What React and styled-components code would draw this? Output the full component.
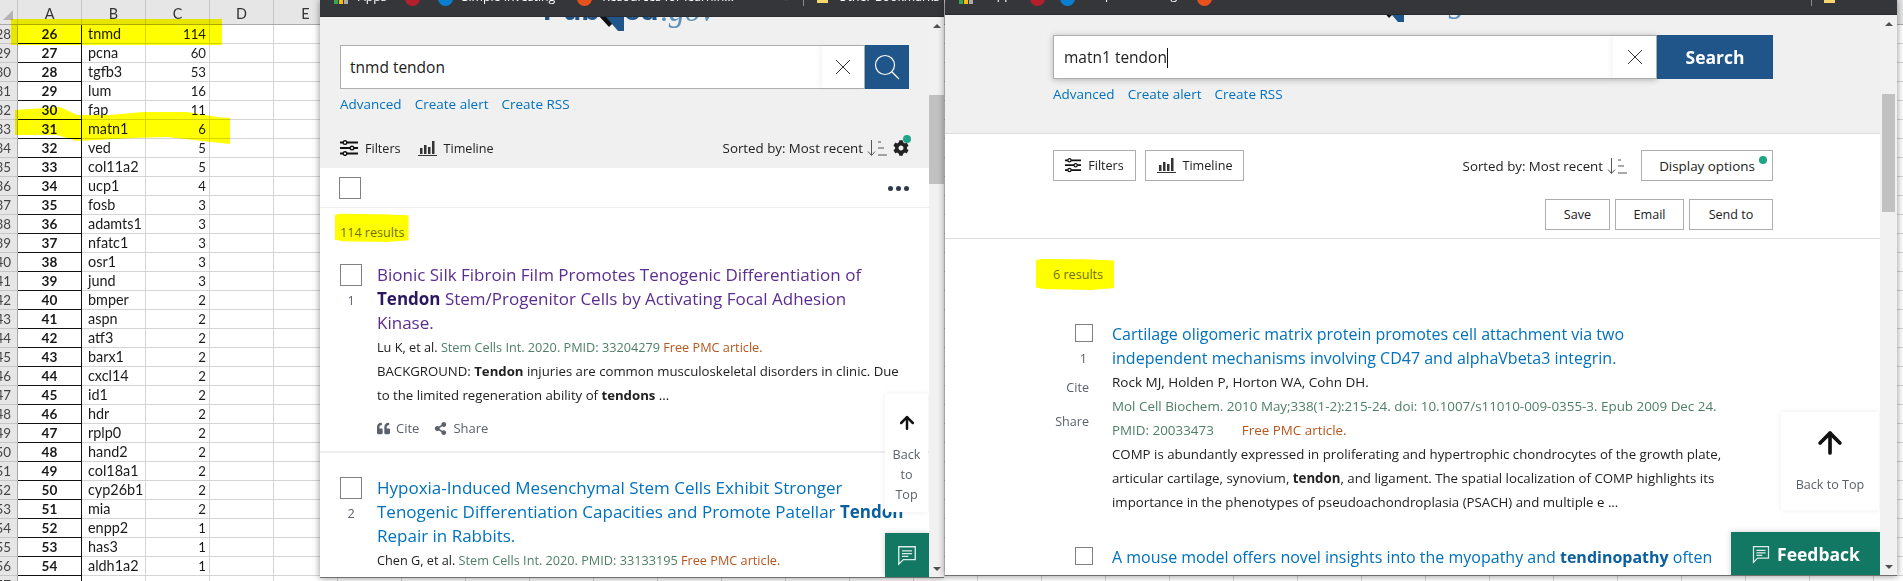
import React from "react";
import styled, { createGlobalStyle } from "styled-components";
import { ArrowUp } from "lucide-react";
import { FaCog, FaQuoteLeft, FaShareAlt } from "react-icons/fa";

const Global = createGlobalStyle`
  html, body { margin: 0; padding: 0; background: #fff; overflow: hidden; }
  * { box-sizing: border-box; }
`;

const UI = `"Open Sans", "Noto Sans", sans-serif`;

/* ---------- spreadsheet ---------- */
const Desktop = styled.div`
  position: relative;
  width: 1903px;
  height: 581px;
  overflow: hidden;
  background: #fff;
`;
const Sheet = styled.div`
  display: flex;
  flex-direction: column;
  font-family: Lato, "Liberation Sans", sans-serif;
  font-size: 14.4px;
  color: #1a1a1a;
`;
const HeaderRow = styled.div`
  display: flex;
  height: 25px;
  background: #e6e6e6;
  border-bottom: 1px solid #a9a9a9;
`;
const Corner = styled.div`
  width: 18px;
  flex: none;
  border-right: 1px solid #c6c6c6;
  display: flex;
  align-items: flex-end;
  justify-content: flex-end;
  padding: 0 4px 4px 0;
`;
const CornerMark = styled.div`
  width: 10px;
  height: 10px;
  background: #b4b4b4;
  clip-path: polygon(100% 0, 100% 100%, 0 100%);
`;
const ColHead = styled.div`
  width: 64px;
  flex: none;
  text-align: center;
  padding-top: 5px;
  line-height: 18px;
  border-right: 1px solid #c6c6c6;
  color: #333;
`;
const Row = styled.div`
  display: flex;
  height: 19px;
`;
const RowNum = styled.div`
  width: 18px;
  flex: none;
  background: #e6e6e6;
  border-right: 1px solid #a9a9a9;
  border-bottom: 1px solid #c6c6c6;
  text-align: right;
  padding-right: 6px;
  font-size: 13.4px;
  line-height: 18px;
  color: #444;
  white-space: nowrap;
  direction: rtl;
  overflow: hidden;
`;
const CellA = styled.div`
  width: 64px;
  flex: none;
  border-right: 1px solid #111;
  border-bottom: 1px solid #111;
  text-align: center;
  font-size: 13.6px;
  font-weight: 700;
  line-height: 19px;
`;
const CellB = styled.div`
  width: 64px;
  flex: none;
  border-right: 1px solid #d4d4d4;
  border-bottom: 1px solid #d4d4d4;
  padding-left: 6px;
  line-height: 18px;
  white-space: nowrap;
`;
const CellC = styled(CellB)`
  text-align: right;
  font-size: 13.2px;
  padding: 0 3px 0 0;
`;
const Empty = styled(CellB)``;
const Filler = styled.div`
  flex: 1;
  border-bottom: 1px solid #d4d4d4;
  background: repeating-linear-gradient(to right, transparent 0 63px, #d4d4d4 63px 64px);
`;
const Marker = styled.svg`
  position: absolute;
  left: 0;
  top: 0;
  mix-blend-mode: multiply;
  pointer-events: none;
`;

const genes = [
  [28, 26, "tnmd", 114], [29, 27, "pcna", 60], [30, 28, "tgfb3", 53], [31, 29, "lum", 16],
  [32, 30, "fap", 11], [33, 31, "matn1", 6], [34, 32, "ved", 5], [35, 33, "col11a2", 5],
  [36, 34, "ucp1", 4], [37, 35, "fosb", 3], [38, 36, "adamts1", 3], [39, 37, "nfatc1", 3],
  [40, 38, "osr1", 3], [41, 39, "jund", 3], [42, 40, "bmper", 2], [43, 41, "aspn", 2],
  [44, 42, "atf3", 2], [45, 43, "barx1", 2], [46, 44, "cxcl14", 2], [47, 45, "id1", 2],
  [48, 46, "hdr", 2], [49, 47, "rplp0", 2], [50, 48, "hand2", 2], [51, 49, "col18a1", 2],
  [52, 50, "cyp26b1", 2], [53, 51, "mia", 2], [54, 52, "enpp2", 1], [55, 53, "has3", 1],
  [56, 54, "aldh1a2", 1], [57, "", "", ""],
];

const Spreadsheet = () => (
  <Sheet>
    <HeaderRow>
      <Corner><CornerMark /></Corner>
      {["A", "B", "C", "D", "E"].map((c) => <ColHead key={c}>{c}</ColHead>)}
    </HeaderRow>
    {genes.map(([n, a, b, c]) => (
      <Row key={n}>
        <RowNum>{n}</RowNum>
        <CellA>{a}</CellA>
        <CellB>{b}</CellB>
        <CellC>{c}</CellC>
        <Empty />
        <Empty />
        <Filler />
      </Row>
    ))}
  </Sheet>
);

/* ---------- browser window ---------- */
const Win = styled.div`
  position: absolute;
  left: ${(p) => p.$left}px;
  top: 0;
  width: ${(p) => p.$w}px;
  height: ${(p) => p.$h}px;
  display: flex;
  flex-direction: column;
  overflow: hidden;
  background: #fff;
  box-shadow: 0 0 7px rgba(0, 0, 0, 0.45);
  border-bottom: 1px solid #707070;
  font-family: ${UI};
`;
const Bookmarks = styled.div`
  height: ${(p) => p.$h}px;
  flex: none;
  background: #35363a;
  border-bottom: 1px solid #2a2b2e;
  display: flex;
  align-items: flex-start;
  overflow: hidden;
  color: #fff;
  font-size: 12.3px;
  line-height: 16px;
  white-space: nowrap;
`;
const Mark = styled.span`
  flex: none;
  margin-left: ${(p) => p.$x}px;
  margin-top: ${(p) => p.$y ?? -11}px;
`;
const Dot = styled.span`
  flex: none;
  width: 15px;
  height: 15px;
  border-radius: 50%;
  background: ${(p) => p.$c};
  margin-left: ${(p) => p.$x}px;
  margin-top: -9px;
`;
const AppsGrid = styled.span`
  flex: none;
  width: 15px;
  margin-left: ${(p) => p.$x}px;
  height: 4px;
  background: linear-gradient(to right, #34a853 0 4px, transparent 4px 5px, #fbbc05 5px 9px, transparent 9px 10px, #aaa 10px 14px, transparent 14px);
`;
const Sep = styled.span`
  flex: none;
  width: 1px;
  height: 6px;
  background: #8a8b8d;
  margin-left: ${(p) => p.$x}px;
`;
const Folder = styled.span`
  flex: none;
  width: 11px;
  height: 3px;
  background: #f5d76e;
  margin-left: ${(p) => p.$x}px;
`;
const Main = styled.div`
  flex: 1;
  display: flex;
  min-height: 0;
`;
const Scroller = styled.div`
  position: relative;
  flex: 1;
  min-width: 0;
  overflow: hidden;
`;
const Track = styled.div`
  flex: none;
  width: ${(p) => p.$w}px;
  background: #f1f1f1;
  display: flex;
  flex-direction: column;
  align-items: center;
  padding: 7px 0 6px;
`;
const Thumb = styled.div`
  width: ${(p) => p.$w}px;
  height: ${(p) => p.$h}px;
  margin-top: ${(p) => p.$top}px;
  background: #c1c1c1;
`;
const ArrowU = styled.div`
  width: 0;
  height: 0;
  border-left: 4px solid transparent;
  border-right: 4px solid transparent;
  border-bottom: 4px solid #505050;
`;
const ArrowD = styled(ArrowU)`
  margin-top: auto;
  border-bottom: 0;
  border-top: 4px solid #505050;
`;

/* ---------- search header ---------- */
const Head = styled.div`
  background: #f0f0f0;
  padding: 0 ${(p) => p.$pr}px ${(p) => p.$pb}px ${(p) => p.$pl}px;
  border-bottom: ${(p) => (p.$line ? "1px solid #dcdcdc" : "0")};
`;
const LogoClip = styled.div`
  height: ${(p) => p.$h}px;
  margin-bottom: ${(p) => p.$mb}px;
  padding-left: ${(p) => p.$x}px;
  overflow: hidden;
  display: flex;
  align-items: flex-end;
  white-space: nowrap;
  line-height: 1;
`;
const LogoText = styled.span`
  font-family: "Liberation Sans", sans-serif;
  font-weight: 700;
  font-size: 30px;
  color: #20558a;
  margin-bottom: 6px;
`;
const LogoGov = styled.span`
  font-family: "Liberation Serif", serif;
  font-style: italic;
  font-size: 32px;
  color: #5d8fb8;
  margin: 0 0 5px 2px;
`;
const SearchRow = styled.div`
  display: flex;
  height: 44px;
`;
const SearchBox = styled.div`
  flex: 1;
  display: flex;
  align-items: center;
  justify-content: space-between;
  background: #fff;
  border: 1px solid #aeaeae;
  padding-left: ${(p) => p.$pl}px;
  font-size: 15.5px;
  color: #212121;
  box-shadow: ${(p) => (p.$focus ? "0 1px 6px rgba(0,0,0,.25)" : "none")};
`;
const Caret = styled.span`
  display: inline-block;
  width: 1px;
  height: 20px;
  background: #111;
  vertical-align: middle;
`;
const Clear = styled.div`
  width: ${(p) => p.$w}px;
  height: 100%;
  display: flex;
  align-items: center;
  justify-content: center;
  box-shadow: -3px 0 4px rgba(0, 0, 0, 0.04);
`;
const SearchBtn = styled.div`
  width: ${(p) => p.$w}px;
  flex: none;
  background: #20558a;
  color: #fff;
  font-weight: 700;
  font-size: 17.5px;
  display: flex;
  align-items: center;
  justify-content: center;
`;
const Links = styled.div`
  display: flex;
  gap: 13px;
  margin-top: 5px;
  font-size: 13.5px;
  line-height: 20px;
  color: #0071bc;
`;
const Toolbar = styled.div`
  display: flex;
  align-items: center;
  justify-content: space-between;
  height: ${(p) => p.$h}px;
  margin-top: ${(p) => p.$mt}px;
  font-size: 12.6px;
  color: #212121;
`;
const ActionBar = styled(Toolbar)`
  justify-content: flex-end;
  gap: 5px;
`;
const Controls = styled.div`
  flex: 1;
`;
const ToolGroup = styled.div`
  display: flex;
  align-items: center;
  gap: ${(p) => p.$gap}px;
`;
const PlainTool = styled.div`
  display: flex;
  align-items: center;
  gap: 7px;
`;
const Sorted = styled.span`
  font-size: 13.3px;
`;
const BoxTool = styled.div`
  display: flex;
  align-items: center;
  justify-content: center;
  gap: 7px;
  height: 31px;
  width: ${(p) => p.$w}px;
  margin-left: ${(p) => p.$ml ?? 0}px;
  background: #fff;
  border: 1px solid #aeaeae;
  position: relative;
`;
const DisplayLabel = styled.span`
  font-size: 13.4px;
`;
const Status = styled.span`
  position: absolute;
  width: 8px;
  height: 8px;
  border-radius: 50%;
  background: #20a58a;
  right: ${(p) => p.$r}px;
  top: ${(p) => p.$t}px;
`;
const GearWrap = styled.span`
  position: relative;
  display: flex;
  margin-left: 1px;
`;

/* ---------- results ---------- */
const Actions = styled.div`
  display: flex;
  align-items: center;
  justify-content: space-between;
  padding: 9px 20px 8px 19px;
  border-bottom: 1px solid #eee;
`;
const Rule = styled.div`
  height: 9px;
  border-bottom: 1px solid #dcdcdc;
`;
const Check = styled.div`
  flex: none;
  width: ${(p) => p.$s}px;
  height: ${(p) => p.$s}px;
  border: 1px solid #808080;
  background: #fff;
  margin-top: ${(p) => p.$mt ?? 0}px;
`;
const Dots = styled.div`
  display: flex;
  gap: 3px;
  & > i {
    width: 5px;
    height: 5px;
    border-radius: 50%;
    background: #2d3a4a;
  }
`;
const Count = styled.div`
  display: table;
  background: #ffff00;
  color: #6f6f10;
  font-size: 12.6px;
  line-height: ${(p) => p.$lh}px;
  margin: ${(p) => p.$m};
  padding: ${(p) => p.$p};
  clip-path: polygon(0 6%, 8% 3%, 60% 4%, 100% 8%, 100% 94%, 70% 100%, 10% 97%, 0 92%);
`;
const Result = styled.div`
  display: flex;
  padding: ${(p) => p.$p};
  border-bottom: ${(p) => (p.$sep ? "2px solid #eee" : "0")};
`;
const Side = styled.div`
  flex: none;
  width: ${(p) => p.$w}px;
  display: flex;
  flex-direction: column;
  align-items: ${(p) => p.$align};
  font-size: 12.6px;
  color: #5b616b;
`;
const Num = styled.div`
  line-height: 20px;
  margin: ${(p) => p.$m};
`;
const SideLink = styled.div`
  line-height: 20px;
  margin: ${(p) => p.$m};
`;
const Body = styled.div`
  margin-left: ${(p) => p.$ml}px;
  padding-top: ${(p) => p.$pt ?? 0}px;
  white-space: nowrap;
`;
const Title = styled.div`
  font-size: ${(p) => p.$s}px;
  line-height: 24px;
  color: ${(p) => (p.$visited ? "#5b2d91" : "#0071bc")};
  & b { font-weight: 700; color: ${(p) => (p.$visited ? "#2b1660" : "#0a5f9e")}; }
`;
const Line = styled.div`
  font-size: ${(p) => p.$s}px;
  line-height: 24px;
  color: #212121;
  & b { font-weight: 700; }
`;
const Cit = styled.span`
  color: #4f7f68;
`;
const Free = styled.span`
  color: #b5561d;
  margin-left: ${(p) => p.$ml ?? 0}px;
`;
const CiteRow = styled.div`
  display: flex;
  align-items: center;
  gap: 15px;
  height: 24px;
  margin-top: 9px;
  font-size: 13px;
  color: #5b616b;
`;
const CiteItem = styled.span`
  display: flex;
  align-items: center;
  gap: 6px;
`;

/* ---------- floating ---------- */
const BackTop = styled.div`
  position: absolute;
  right: 1px;
  top: ${(p) => p.$top}px;
  width: ${(p) => p.$w}px;
  height: ${(p) => p.$h}px;
  background: #fff;
  display: flex;
  flex-direction: column;
  align-items: center;
  text-align: center;
  padding-top: ${(p) => p.$pt}px;
  font-size: 12.6px;
  line-height: 20px;
  color: #5b616b;
  box-shadow: 0 0 6px rgba(0, 0, 0, 0.08);
`;
const BackLabel = styled.div`
  margin-top: ${(p) => p.$mt}px;
`;
const Feedback = styled.div`
  position: absolute;
  right: 0;
  bottom: 0;
  width: ${(p) => p.$w}px;
  height: ${(p) => p.$h}px;
  background: #137863;
  color: #fff;
  font-size: 17.5px;
  font-weight: 700;
  display: flex;
  align-items: center;
  justify-content: center;
  gap: 6px;
  box-shadow: 0 0 6px rgba(0, 0, 0, 0.2);
`;

/* ---------- icons ---------- */
const XIcon = ({ s }) => (
  <svg width={s} height={s} viewBox="0 0 16 16" fill="none" stroke="#333" strokeWidth="1">
    <path d="M1 1l14 14M15 1L1 15" />
  </svg>
);
const SearchIcon = () => (
  <svg width="26" height="26" viewBox="0 0 26 26" fill="none" stroke="#fff" strokeWidth="1.2">
    <circle cx="11" cy="11" r="9.5" />
    <path d="M18 18l7 7" />
  </svg>
);
const Sliders = ({ s = 18 }) => (
  <svg width={s} height={s * 0.9} viewBox="0 0 18 16" fill="none" stroke="#111" strokeWidth="2">
    <path d="M0 2.5h18M0 8h18M0 13.5h18" />
    <g fill="#fff" strokeWidth="1.4">
      <circle cx="5" cy="2.5" r="1.8" />
      <circle cx="12" cy="8" r="1.8" />
      <circle cx="5" cy="13.5" r="1.8" />
    </g>
  </svg>
);
const Bars = ({ s = 19 }) => (
  <svg width={s} height={s * 0.85} viewBox="0 0 19 16" fill="#333">
    <path d="M2 8h2.5v6H2zM6 5h2.5v9H6zM10 7h2.5v7H10zM14 1h2.5v13H14zM0 15h19v1H0z" />
  </svg>
);
const SortIcon = () => (
  <svg width="21" height="18" viewBox="0 0 21 18" fill="none" stroke="#555" strokeWidth="1">
    <path d="M4.5 1v15M1 12.5l3.5 4 3.5-4M11 3h3M11 9h6M11 16h9" />
  </svg>
);
const Chat = ({ s }) => (
  <svg width={s} height={s} viewBox="0 0 24 24" fill="none" stroke="#fff" strokeOpacity=".85" strokeWidth="1.5">
    <path d="M3 3h18v14H8l-5 5z" />
    <path d="M6.5 7.5h11M6.5 10.5h11M6.5 13.5h7" />
  </svg>
);
const BookMark = () => (
  <svg width="24" height="22" viewBox="0 0 24 22" style={{ marginBottom: -8 }}>
    <path d="M0 0l8 8 4-1 12 14V0z" fill="#20558a" />
    <path d="M0 0l9 10 3-3L6 0z" fill="#111" />
  </svg>
);
const TopLogo = ({ h, mb, x }) => (
  <LogoClip $h={h} $mb={mb} $x={x}>
    <LogoText>Pub</LogoText>
    <BookMark />
    <LogoText>ed</LogoText>
    <LogoGov>.gov</LogoGov>
  </LogoClip>
);

/* ---------- page ---------- */
export default function App() {
  return (
    <Desktop>
      <Global />
      <Spreadsheet />
      <Marker width="240" height="150" viewBox="0 0 240 150">
        <path d="M11 19H222V45H11z" fill="#ffff00" />
        <path d="M15 110L60 107L77 115L110 115L143 112L187 112L217 117L230 118V144L167 137L133 138L77 141L57 135L15 135z" fill="#ffff00" />
      </Marker>

      <Win $left={320} $w={624} $h={578}>
        <Bookmarks $h={17}>
          <AppsGrid $x={14} />
          <Mark $x={9}>Apps</Mark>
          <Dot $x={18} $c="#b3202c" />
          <Dot $x={18} $c="#0a7fd0" />
          <Mark $x={9}>Simple Investing</Mark>
          <Dot $x={22} $c="#e8501c" />
          <Mark $x={10}>Resources for learnin...</Mark>
          <Mark $x={50}>»</Mark>
          <Sep $x={13} />
          <Folder $x={13} />
          <Mark $x={10}>Other Bookmarks</Mark>
        </Bookmarks>
        <Main>
          <Scroller>
            <Head $pl={20} $pr={20} $pb={8}>
              <TopLogo h={14} mb={14} x={203} />
              <SearchRow>
                <SearchBox $pl={9}>
                  tnmd tendon
                  <Clear $w={42}><XIcon s={16} /></Clear>
                </SearchBox>
                <SearchBtn $w={44}><SearchIcon /></SearchBtn>
              </SearchRow>
              <Links>
                <span>Advanced</span>
                <span>Create alert</span>
                <span>Create RSS</span>
              </Links>
              <Toolbar $h={24} $mt={22}>
                <ToolGroup $gap={17}>
                  <PlainTool><Sliders />Filters</PlainTool>
                  <PlainTool><Bars />Timeline</PlainTool>
                </ToolGroup>
                <ToolGroup $gap={4}>
                  <Sorted>Sorted by: Most recent</Sorted>
                  <SortIcon />
                  <GearWrap>
                    <FaCog size={16} color="#222" />
                    <Status $r={-2} $t={-5} />
                  </GearWrap>
                </ToolGroup>
              </Toolbar>
            </Head>
            <Actions>
              <Check $s={22} />
              <Dots><i /><i /><i /></Dots>
            </Actions>
            <Count $lh={19} $m="5px 0 20px 15px" $p="10px 4px 0 5px">114 results</Count>
            <Result $p="0 20px 11px 20px" $sep>
              <Side $w={22} $align="center">
                <Check $s={22} $mt={2} />
                <Num $m="5px 0 0">1</Num>
              </Side>
              <Body $ml={15} $pt={1}>
                <Title $s={17} $visited>
                  Bionic Silk Fibroin Film Promotes Tenogenic Differentiation of<br />
                  <b>Tendon</b> Stem/Progenitor Cells by Activating Focal Adhesion<br />
                  Kinase.
                </Title>
                <Line $s={12.7}>Lu K, et al. <Cit>Stem Cells Int. 2020. PMID: 33204279</Cit> <Free>Free PMC article.</Free></Line>
                <Line $s={13.2}>BACKGROUND: <b>Tendon</b> injuries are common musculoskeletal disorders in clinic. Due</Line>
                <Line $s={13.2}>to the limited regeneration ability of <b>tendons</b> ...</Line>
                <CiteRow>
                  <CiteItem><FaQuoteLeft size={13} />Cite</CiteItem>
                  <CiteItem><FaShareAlt size={13} />Share</CiteItem>
                </CiteRow>
              </Body>
            </Result>
            <Result $p="22px 20px 0 20px">
              <Side $w={22} $align="center">
                <Check $s={22} $mt={2} />
                <Num $m="5px 0 0">2</Num>
              </Side>
              <Body $ml={15} $pt={1}>
                <Title $s={17}>
                  Hypoxia-Induced Mesenchymal Stem Cells Exhibit Stronger<br />
                  Tenogenic Differentiation Capacities and Promote Patellar <b>Tendon</b><br />
                  Repair in Rabbits.
                </Title>
                <Line $s={12.7}>Chen G, et al. <Cit>Stem Cells Int. 2020. PMID: 33133195</Cit> <Free>Free PMC article.</Free></Line>
              </Body>
            </Result>
            <BackTop $top={377} $w={43} $h={118} $pt={19}>
              <ArrowUp size={20} strokeWidth={3} color="#111" />
              <BackLabel $mt={12}>Back<br />to<br />Top</BackLabel>
            </BackTop>
            <Feedback $w={44} $h={44}><Chat s={22} /></Feedback>
          </Scroller>
          <Track $w={15}>
            <ArrowU />
            <Thumb $w={15} $h={89} $top={67} />
            <ArrowD />
          </Track>
        </Main>
      </Win>

      <Win $left={945} $w={952} $h={576}>
        <Bookmarks $h={15}>
          <AppsGrid $x={14} />
          <Mark $x={15} $y={-13}>Apps</Mark>
          <Dot $x={12} $c="#b3202c" />
          <Dot $x={15} $c="#0a7fd0" />
          <Mark $x={9} $y={-13}>Simple Investing</Mark>
          <Dot $x={20} $c="#e8501c" />
          <Mark $x={10} $y={-13}>Resources for learnin...</Mark>
          <Mark $x={46} $y={-13}>»</Mark>
          <Sep $x={405} />
          <Folder $x={12} />
        </Bookmarks>
        <Main>
          <Scroller>
            <Head $pl={108} $pr={107} $pb={29} $line>
              <TopLogo h={7} mb={13} x={270} />
              <SearchRow>
                <SearchBox $pl={10} $focus>
                  <span>matn1 tendon<Caret /></span>
                  <Clear $w={43}><XIcon s={16} /></Clear>
                </SearchBox>
                <SearchBtn $w={116}>Search</SearchBtn>
              </SearchRow>
              <Links>
                <span>Advanced</span>
                <span>Create alert</span>
                <span>Create RSS</span>
              </Links>
            </Head>
            <Result $p="16px 107px 0 108px">
              <Controls>
                <Toolbar $h={31} $mt={0}>
                  <ToolGroup $gap={9}>
                    <BoxTool $w={83}><Sliders s={16} />Filters</BoxTool>
                    <BoxTool $w={99}><Bars />Timeline</BoxTool>
                  </ToolGroup>
                  <ToolGroup $gap={4}>
                    <Sorted>Sorted by: Most recent</Sorted>
                    <SortIcon />
                    <BoxTool $w={132} $ml={9}><DisplayLabel>Display options</DisplayLabel><Status $r={5} $t={5} /></BoxTool>
                  </ToolGroup>
                </Toolbar>
                <ActionBar $h={31} $mt={18}>
                  <BoxTool $w={65}>Save</BoxTool>
                  <BoxTool $w={69}>Email</BoxTool>
                  <BoxTool $w={84}>Send to</BoxTool>
                </ActionBar>
              </Controls>
            </Result>
            <Rule />
            <Count $lh={20} $m="19px 0 32px 91px" $p="7px 11px 5px 17px">6 results</Count>
            <Result $p="0 0 31px 108px">
              <Side $w={40} $align="flex-end">
                <Check $s={18} $mt={2} />
                <Num $m="7px 6px 0 0">1</Num>
                <SideLink $m="9px 4px 0 0">Cite</SideLink>
                <SideLink $m="14px 4px 0 0">Share</SideLink>
              </Side>
              <Body $ml={19}>
                <Title $s={16}>
                  Cartilage oligomeric matrix protein promotes cell attachment via two<br />
                  independent mechanisms involving CD47 and alphaVbeta3 integrin.
                </Title>
                <Line $s={13.5}>Rock MJ, Holden P, Horton WA, Cohn DH.</Line>
                <Line $s={13.4}><Cit>Mol Cell Biochem. 2010 May;338(1-2):215-24. doi: 10.1007/s11010-009-0355-3. Epub 2009 Dec 24.</Cit></Line>
                <Line $s={13.4}><Cit>PMID: 20033473</Cit><Free $ml={28}>Free PMC article.</Free></Line>
                <Line $s={13.27}>COMP is abundantly expressed in proliferating and hypertrophic chondrocytes of the growth plate,</Line>
                <Line $s={13.27}>articular cartilage, synovium, <b>tendon</b>, and ligament. The spatial localization of COMP highlights its</Line>
                <Line $s={13.27}>importance in the phenotypes of pseudoachondroplasia (PSACH) and multiple e ...</Line>
              </Body>
            </Result>
            <Result $p="0 0 0 108px">
              <Side $w={40} $align="flex-end">
                <Check $s={18} $mt={2} />
              </Side>
              <Body $ml={19}>
                <Title $s={16}>
                  A mouse model offers novel insights into the myopathy and <b>tendinopathy</b> often<br />
                  associated with pseudoachondroplasia and multiple epiphyseal dysplasia.
                </Title>
              </Body>
            </Result>
            <BackTop $top={397} $w={98} $h={98} $pt={14}>
              <ArrowUp size={34} strokeWidth={2.6} color="#111" />
              <BackLabel $mt={15}>Back to Top</BackLabel>
            </BackTop>
            <Feedback $w={149} $h={43}><Chat s={20} />Feedback</Feedback>
          </Scroller>
          <Track $w={17}>
            <ArrowU />
            <Thumb $w={13} $h={118} $top={68} />
            <ArrowD />
          </Track>
        </Main>
      </Win>
    </Desktop>
  );
}
